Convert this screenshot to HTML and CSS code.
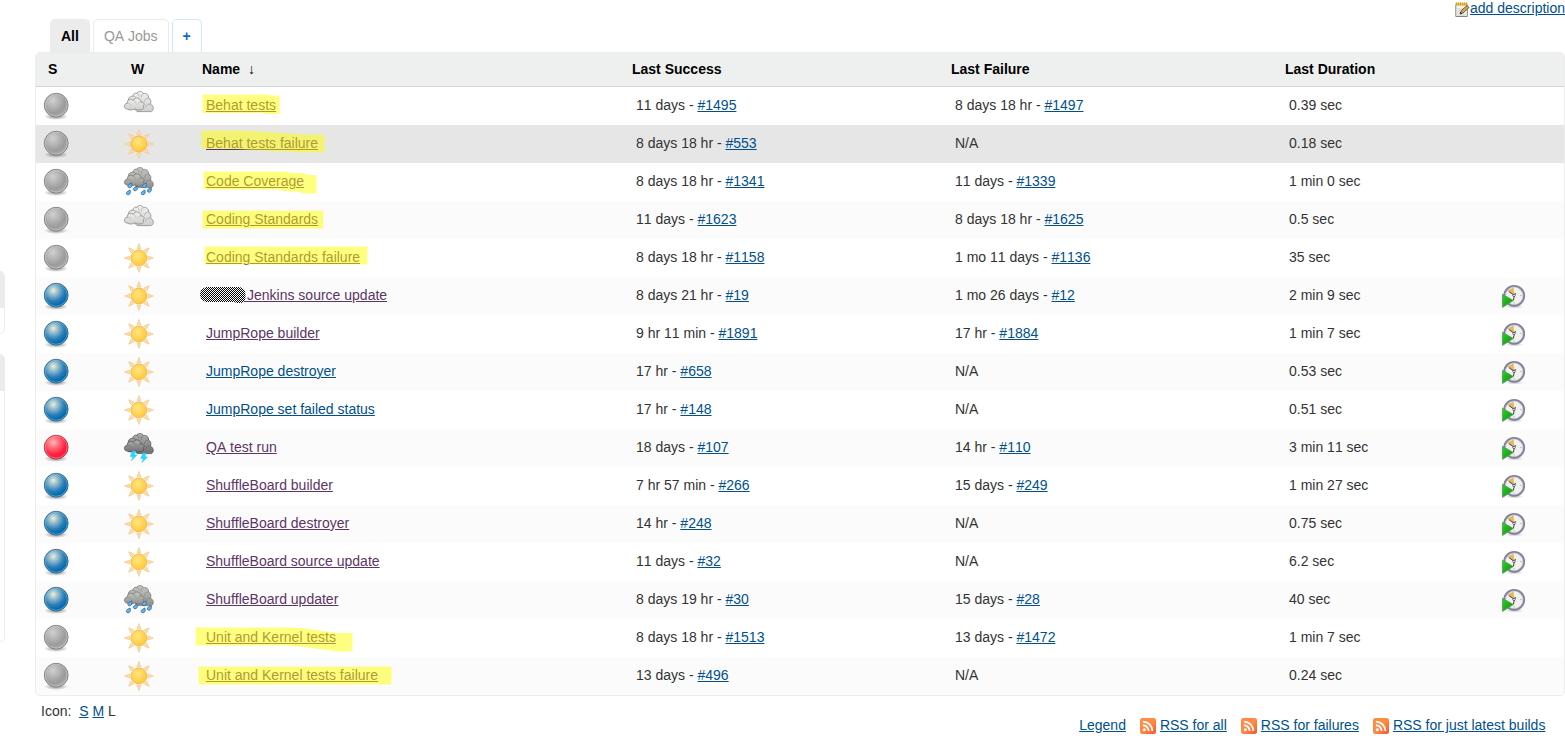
FILE: index.html
```
<!DOCTYPE html>
<html lang="en">
<head>
<meta charset="utf-8">
<title>All [Jenkins]</title>
<link rel="stylesheet" href="styles.css">
</head>
<body>
<svg class="defs" width="0" height="0">
  <defs>
    <radialGradient id="gGrey" cx=".36" cy=".3" r=".75"><stop offset="0" stop-color="#d0d0d0"/><stop offset=".35" stop-color="#b6b6b6"/><stop offset=".7" stop-color="#9b9b9b"/><stop offset="1" stop-color="#b0b0b0"/></radialGradient>
    <radialGradient id="gBlue" cx=".38" cy=".3" r=".75"><stop offset="0" stop-color="#eeeed6"/><stop offset=".28" stop-color="#8fb9cc"/><stop offset=".6" stop-color="#2b7fb8"/><stop offset=".85" stop-color="#0069ab"/><stop offset="1" stop-color="#3394cb"/></radialGradient>
    <radialGradient id="gRed" cx=".38" cy=".3" r=".75"><stop offset="0" stop-color="#ffb9b9"/><stop offset=".35" stop-color="#ff6673"/><stop offset=".7" stop-color="#ff1c3c"/><stop offset="1" stop-color="#fc1c40"/></radialGradient>
    <radialGradient id="gShadow"><stop offset="0" stop-color="#000" stop-opacity=".45"/><stop offset="1" stop-color="#000" stop-opacity="0"/></radialGradient>
    <radialGradient id="gSun" cx=".42" cy=".38" r=".62"><stop offset="0" stop-color="#ffe680"/><stop offset="1" stop-color="#ffc83a"/></radialGradient>
    <linearGradient id="gCloud" x1="0" y1="0" x2="0" y2="1"><stop offset="0" stop-color="#f0f0ee"/><stop offset="1" stop-color="#cfcfcd"/></linearGradient>
    <linearGradient id="gRain" x1="0" y1="0" x2="0" y2="1"><stop offset="0" stop-color="#c6c6c3"/><stop offset="1" stop-color="#90908d"/></linearGradient>
    <linearGradient id="gStorm" x1="0" y1="0" x2="0" y2="1"><stop offset="0" stop-color="#b0b0b0"/><stop offset="1" stop-color="#707070"/></linearGradient>
    <linearGradient id="gRss" x1="0" y1="0" x2="1" y2="1"><stop offset="0" stop-color="#ff8a45"/><stop offset=".5" stop-color="#ff8c42"/><stop offset="1" stop-color="#fb5130"/></linearGradient>
    <linearGradient id="gPlay" x1="0" y1="0" x2="1" y2="1"><stop offset="0" stop-color="#2fd02a"/><stop offset="1" stop-color="#0e8b12"/></linearGradient>
    <pattern id="check" width="2" height="2" patternUnits="userSpaceOnUse"><rect width="2" height="2" fill="#fff"/><path d="M0 0h1v1H0zM1 1h1v1H1z" fill="#000" shape-rendering="crispEdges"/></pattern>

    <symbol id="shade" viewBox="0 0 32 32"><ellipse cx="16" cy="26.600" rx="12" ry="3.400" fill="url(#gShadow)"/></symbol>
    <symbol id="grey" viewBox="0 0 32 32"><use href="#shade"/><circle cx="16.200" cy="15.200" r="11.900" fill="url(#gGrey)" stroke="#7a7a7a" stroke-width=".9"/><circle cx="16.200" cy="15.200" r="11" fill="none" stroke="#cdcdcd" stroke-width=".8" opacity=".7"/></symbol>
    <symbol id="blue" viewBox="0 0 32 32"><use href="#shade"/><circle cx="16.200" cy="15.200" r="11.900" fill="url(#gBlue)" stroke="#2f668c" stroke-width=".9"/><circle cx="16.200" cy="15.200" r="11" fill="none" stroke="#7db6d8" stroke-width=".8" opacity=".7"/></symbol>
    <symbol id="red" viewBox="0 0 32 32"><use href="#shade"/><circle cx="16.200" cy="15.200" r="11.900" fill="url(#gRed)" stroke="#a3364a" stroke-width=".9"/><circle cx="16.200" cy="15.200" r="11" fill="none" stroke="#ff98a0" stroke-width=".8" opacity=".7"/></symbol>

    <path id="ray" d="M13.900 7 15.900 1.600 17.900 7Z" fill="#fcdfae" stroke="#f5ca8c" stroke-width=".8"/>
    <symbol id="sun" viewBox="0 0 32 32">
      <use href="#ray"/><use href="#ray" transform="rotate(45 15.900 16)"/><use href="#ray" transform="rotate(90 15.900 16)"/><use href="#ray" transform="rotate(135 15.900 16)"/><use href="#ray" transform="rotate(180 15.900 16)"/><use href="#ray" transform="rotate(225 15.900 16)"/><use href="#ray" transform="rotate(270 15.900 16)"/><use href="#ray" transform="rotate(315 15.900 16)"/>
      <circle cx="15.900" cy="16" r="7.900" fill="url(#gSun)" stroke="#f5b550" stroke-width=".9"/>
    </symbol>
    <g id="cloudShape">
      <path d="M6 13C4 9 6.500 5.800 9.800 6.300C10 3.500 12.500 2.800 13.800 3.200C15.500 .6 19.500 1.200 20.400 3.600C23.500 2.800 26 5.200 25.500 8C28 9 28.300 12 27.500 14.200C31.500 16 31 21.500 27.500 21.600H14Z"/>
      <path d="M9.800 6.300C11.500 6.200 12.800 7 13.200 8.500M13.800 3.200C15.500 3.800 16.200 5 16.300 6.500M20.400 3.600C18.700 4.500 18.200 6 18.500 7.500M25.500 8C23.300 8 21.800 9.300 21.500 11.500M27.500 14.200C25 13.800 23 15 22.600 17" fill="none" opacity=".65"/>
      <path d="M4.500 19.200C.5 19 .2 13.600 4.300 13.300C3.800 9.800 8 8 10.200 10.300C12 6.500 18 7.500 18 12C21.500 12 22 15 20.200 15.900C21.500 18.500 19.500 20.200 17.500 19.800C15 20.300 13 19.800 12 18.700C10 20.300 6.500 20.500 4.500 19.200Z"/>
      <path d="M10.200 10.300C12 10.500 13 12 12.700 13.500M4.300 13.300C6.300 13 7.500 14 8 15.500M18 12C16.300 12 15 13 15 14.500" fill="none" opacity=".4"/>
    </g>
    <path id="drop" d="M4 0C5 2 4.200 4.800 2.100 4.800C0 4.800-.1 2.600 1.300 1.600Z" fill="#6db4ec" stroke="#2767a2" stroke-width=".8"/>
    <path id="bolt" d="M3 0 6 .4 4.500 3.800 7.300 4.100 1.500 10 3 6 .2 5.700Z" fill="#25d8ff" stroke="#1fb4ee" stroke-width=".3"/>
    <symbol id="cloud" viewBox="0 0 32 32"><use href="#cloudShape" fill="url(#gCloud)" stroke="#8c8c8a" stroke-width=".8"/></symbol>
    <symbol id="rain" viewBox="0 0 32 32"><use href="#cloudShape" fill="url(#gRain)" stroke="#70706e" stroke-width=".7"/><use href="#drop" x="4.500" y="17"/><use href="#drop" x="10" y="20"/><use href="#drop" x="19" y="17"/><use href="#drop" x="3" y="24"/><use href="#drop" x="17.800" y="24"/><use href="#drop" x="24" y="21.500"/></symbol>
    <symbol id="storm" viewBox="0 0 32 32"><use href="#cloudShape" fill="url(#gStorm)" stroke="#4c4c4c" stroke-width=".7"/><use href="#bolt" x="6.800" y="18.800"/><use href="#bolt" x="17.300" y="20.800"/></symbol>

    <symbol id="clock" viewBox="0 0 32 32">
      <ellipse cx="16.500" cy="26.500" rx="9" ry="2" fill="url(#gShadow)" opacity=".6"/>
      <circle cx="16.200" cy="15.800" r="9.800" fill="#f1f1ee" stroke="#80829a" stroke-width="2.200"/>
      <circle cx="16.200" cy="15.800" r="8.800" fill="none" stroke="#c9cad8" stroke-width=".7"/>
      <path d="M10.300 10.500 15.200 8 16 15Z" fill="#edb752" stroke="#cf9c40" stroke-width=".4"/>
      <path d="M10.800 11.500 16.500 15.500 15.300 20.500M16.500 15.500 17.500 13" fill="none" stroke="#444" stroke-width="1"/>
      <circle cx="16" cy="15.400" r="1.200" fill="#fff" stroke="#333" stroke-width=".7"/>
      <path d="M22 15.500h1.500M16 23.500v-1.500" stroke="#bbb"/>
      <path d="M4.500 14.200 15.300 20.500 4.500 27.500Z" fill="url(#gPlay)" stroke="#56a050" stroke-width=".8"/>
    </symbol>
    <symbol id="rss" viewBox="0 0 16 16"><rect width="16" height="16" rx="2.500" fill="url(#gRss)"/><circle cx="4.300" cy="11.700" r="1.500" fill="#fff"/><path d="M2.900 7.300a5.800 5.800 0 0 1 5.800 5.800M2.900 3.600a9.500 9.500 0 0 1 9.500 9.500" fill="none" stroke="#fff" stroke-width="1.900"/></symbol>
  </defs>
</svg>

<div class="page">
  <aside class="side">
    <div class="pane pane-queue"><div class="pane-head"></div></div>
    <div class="pane pane-executors"><div class="pane-head"></div></div>
  </aside>
  <main class="main">
    <div class="description">
      <svg width="15" height="16" viewBox="0 0 15 16"><path d="M.8 2.500h11.500v12H.8z" fill="#f5f5f2" stroke="#85857f"/><path d="M2.500 7h7M2.500 9h7M2.500 11h6M2.500 13h8" stroke="#bbb" stroke-width=".8"/><path d="M.5 .8h12v3H.5z" fill="#f0c350"/><path d="M1.500 .3v3M3.500 .3v3M5.500 .3v3M7.500 .3v3M9.500 .3v3M11.500 .3v3" stroke="#c58d22" stroke-width=".7"/><path d="m5 12 1.500-3.500 5.500-5 2 2-6 5.500Z" fill="#dca45a" stroke="#4d3a23" stroke-width=".8"/><path d="m5 12 .6-2 1.400 1.300Z" fill="#222"/></svg><a href="#">add description</a>
    </div>
    <nav class="tabs"><a class="tab active" href="#">All</a><a class="tab" href="#">QA Jobs</a><a class="tab add" href="#">+</a></nav>
    <div class="projects">
      <div class="row head"><b>S</b><b>W</b><b>Name <span class="arrow">↓</span></b><b>Last Success</b><b>Last Failure</b><b>Last Duration</b><b></b></div>
      <div class="row"><svg><use href="#grey"/></svg><svg><use href="#cloud"/></svg><div class="name"><a class="visited" href="#">Behat tests</a><svg class="mark"><path d="M6.700 7.500H72L74 8.500H83.500V27H70L67 26H6.700Z"/></svg></div><div>11 days - <a href="#">#1495</a></div><div>8 days 18 hr - <a href="#">#1497</a></div><div>0.39 sec</div><div></div></div>
      <div class="row hover"><svg><use href="#grey"/></svg><svg><use href="#sun"/></svg><div class="name"><a class="visited" href="#">Behat tests failure</a><svg class="mark"><path d="M5.500 5.500H44C66 6 84 8 96 8.500L108 9.500H128.500V27.500H100L94 26.500L75 26L40 24L5.500 23.500Z"/></svg></div><div>8 days 18 hr - <a href="#">#553</a></div><div>N/A</div><div>0.18 sec</div><div></div></div>
      <div class="row"><svg><use href="#grey"/></svg><svg><use href="#rain"/></svg><div class="name"><a class="visited" href="#">Code Coverage</a><svg class="mark"><path d="M7.500 8.500H90L96 10H107L112 12H120.500V30.500H107L102 28.500H92L82 26.500H7.500Z"/></svg></div><div>8 days 18 hr - <a href="#">#1341</a></div><div>11 days - <a href="#">#1339</a></div><div>1 min 0 sec</div><div></div></div>
      <div class="row"><svg><use href="#grey"/></svg><svg><use href="#cloud"/></svg><div class="name"><a class="visited" href="#">Coding Standards</a><svg class="mark"><path d="M6.500 9.500H127.500V27.500H6.500Z"/></svg></div><div>11 days - <a href="#">#1623</a></div><div>8 days 18 hr - <a href="#">#1625</a></div><div>0.5 sec</div><div></div></div>
      <div class="row"><svg><use href="#grey"/></svg><svg><use href="#sun"/></svg><div class="name"><a class="visited" href="#">Coding Standards failure</a><svg class="mark"><path d="M8.500 7.500H171.500V25.500H8.500Z"/></svg></div><div>8 days 18 hr - <a href="#">#1158</a></div><div>1 mo 11 days - <a href="#">#1136</a></div><div>35 sec</div><div></div></div>
      <div class="row"><svg><use href="#blue"/></svg><svg><use href="#sun"/></svg><div class="name masked"><a class="visited" href="#">Jenkins source update</a><svg class="scribble"><path d="M10 24.500H52" stroke="#5c3566"/><path d="M10 10H43Q49.500 11 49.500 17V21Q49 26 44 26H41L38 25H10Q4 23 4 17.500Q4 12 10 10Z" fill="url(#check)"/></svg></div><div>8 days 21 hr - <a href="#">#19</a></div><div>1 mo 26 days - <a href="#">#12</a></div><div>2 min 9 sec</div><svg><use href="#clock"/></svg></div>
      <div class="row"><svg><use href="#blue"/></svg><svg><use href="#sun"/></svg><div class="name"><a class="visited" href="#">JumpRope builder</a></div><div>9 hr 11 min - <a href="#">#1891</a></div><div>17 hr - <a href="#">#1884</a></div><div>1 min 7 sec</div><svg><use href="#clock"/></svg></div>
      <div class="row"><svg><use href="#blue"/></svg><svg><use href="#sun"/></svg><div class="name"><a href="#">JumpRope destroyer</a></div><div>17 hr - <a href="#">#658</a></div><div>N/A</div><div>0.53 sec</div><svg><use href="#clock"/></svg></div>
      <div class="row"><svg><use href="#blue"/></svg><svg><use href="#sun"/></svg><div class="name"><a href="#">JumpRope set failed status</a></div><div>17 hr - <a href="#">#148</a></div><div>N/A</div><div>0.51 sec</div><svg><use href="#clock"/></svg></div>
      <div class="row"><svg><use href="#red"/></svg><svg><use href="#storm"/></svg><div class="name"><a class="visited" href="#">QA test run</a></div><div>18 days - <a href="#">#107</a></div><div>14 hr - <a href="#">#110</a></div><div>3 min 11 sec</div><svg><use href="#clock"/></svg></div>
      <div class="row"><svg><use href="#blue"/></svg><svg><use href="#sun"/></svg><div class="name"><a class="visited" href="#">ShuffleBoard builder</a></div><div>7 hr 57 min - <a href="#">#266</a></div><div>15 days - <a href="#">#249</a></div><div>1 min 27 sec</div><svg><use href="#clock"/></svg></div>
      <div class="row"><svg><use href="#blue"/></svg><svg><use href="#sun"/></svg><div class="name"><a class="visited" href="#">ShuffleBoard destroyer</a></div><div>14 hr - <a href="#">#248</a></div><div>N/A</div><div>0.75 sec</div><svg><use href="#clock"/></svg></div>
      <div class="row"><svg><use href="#blue"/></svg><svg><use href="#sun"/></svg><div class="name"><a class="visited" href="#">ShuffleBoard source update</a></div><div>11 days - <a href="#">#32</a></div><div>N/A</div><div>6.2 sec</div><svg><use href="#clock"/></svg></div>
      <div class="row"><svg><use href="#blue"/></svg><svg><use href="#rain"/></svg><div class="name"><a class="visited" href="#">ShuffleBoard updater</a></div><div>8 days 19 hr - <a href="#">#30</a></div><div>15 days - <a href="#">#28</a></div><div>40 sec</div><svg><use href="#clock"/></svg></div>
      <div class="row"><svg><use href="#grey"/></svg><svg><use href="#sun"/></svg><div class="name"><a class="visited" href="#">Unit and Kernel tests</a><svg class="mark"><path d="M-.3 8.500H95C115 9.500 128 12 140 14H156.500V32.500H142C130 31 115 28.500 92 26.500H-.3Z"/></svg></div><div>8 days 18 hr - <a href="#">#1513</a></div><div>13 days - <a href="#">#1472</a></div><div>1 min 7 sec</div><div></div></div>
      <div class="row"><svg><use href="#grey"/></svg><svg><use href="#sun"/></svg><div class="name"><a class="visited" href="#">Unit and Kernel tests failure</a><svg class="mark"><path d="M2.500 9.500H195.500V27.500H2.500Z"/></svg></div><div>13 days - <a href="#">#496</a></div><div>N/A</div><div>0.24 sec</div><div></div></div>
    </div>
    <footer class="footer">
      <div class="sizes">Icon: &nbsp;<a href="#">S</a> <a href="#">M</a> L</div>
      <div class="feeds"><a href="#">Legend</a><span><svg><use href="#rss"/></svg><a href="#">RSS for all</a></span><span><svg><use href="#rss"/></svg><a href="#">RSS for failures</a></span><span><svg><use href="#rss"/></svg><a href="#">RSS for just latest builds</a></span></div>
    </footer>
  </main>
</div>
</body>
</html>
```
FILE: styles.css
```
* { box-sizing: border-box; }
html, body { margin: 0; }
body {
  height: 744px;
  overflow: hidden;
  background: #fff;
  color: #333;
  font: 14px/17px "Liberation Sans", Arial, sans-serif;
  font-kerning: none;
}
a { color: #00508c; text-decoration: underline; }
a.visited { color: #5c3566; }
.defs { position: absolute; }
.page { display: flex; height: 744px; }

.side { width: 35px; padding: 271px 30px 0 0; }
.pane { border: 1px solid #ececec; border-left: 0; border-radius: 0 5px 5px 0; overflow: hidden; }
.pane-head { height: 36px; background: #ececec; }
.pane-queue { height: 63px; margin-bottom: 20px; }
.pane-executors { height: 288px; }

.main { width: 1530px; }
.description { display: flex; justify-content: flex-end; height: 19px; }
.description svg { margin-top: 2px; }

.tabs { display: flex; gap: 3px; height: 33px; padding-left: 15px; }
.tab {
  height: 33px;
  padding: 8px 10px 0;
  border: 1px solid #ebebeb;
  border-bottom: 0;
  border-radius: 5px 5px 0 0;
  color: #999;
  text-decoration: none;
}
.tab.active { background: #ececec; color: #000; font-weight: bold; }
.tab.add { border-color: #ccebfa; color: #0b66cc; font-weight: bold; }

.projects { height: 644px; border: 1px solid #ececec; border-radius: 5px; overflow: hidden; }
.row {
  display: grid;
  grid-template-columns: 83px 77px 436px 319px 334px 209px 1fr;
  align-items: center;
  height: 38px;
  padding-left: 4px;
}
.row:nth-child(odd) { background: #fbfbfb; }
.row.hover { background: #e6e6e6; }
.row > svg { width: 32px; height: 32px; }
.row > div { height: 38px; padding-top: 10px; }
.row > .name { position: relative; margin-left: -4px; padding-left: 10px; }
.mark, .scribble { position: absolute; left: 0; top: 0; width: 240px; height: 38px; overflow: visible; pointer-events: none; }
.mark { fill: #ff0; fill-opacity: .5; }
.row > .name.masked { padding-left: 51px; }
.row.head { height: 34px; padding-left: 0; border-bottom: 1px solid #d6d6d6; background: #eef0ef; color: #000; }
.row.head b:first-child, .row.head b:nth-child(2) { padding-left: 12px; }
.row.head b:nth-child(3) { padding-left: 6px; }
.arrow { margin-left: 4px; font-size: 14px; font-weight: normal; }

.footer { display: flex; justify-content: space-between; padding: 7px 19.6px 0 6px; }
.feeds { display: flex; gap: 14px; margin-top: 14px; }
.feeds span { display: flex; gap: 4px; }
.feeds svg { width: 16px; height: 16px; margin-top: 1px; }
```
